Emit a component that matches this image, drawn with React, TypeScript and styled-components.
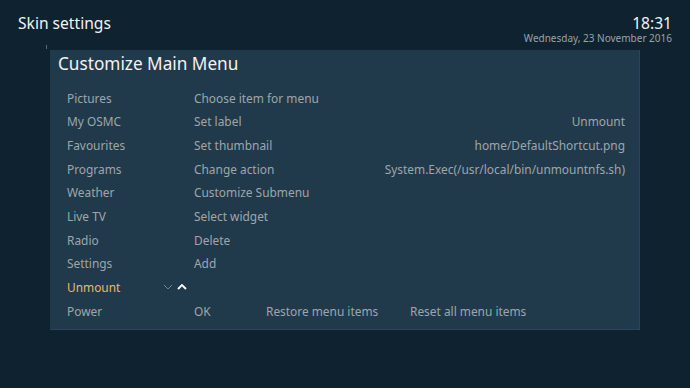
import styled, { createGlobalStyle } from "styled-components";

const GlobalStyle = createGlobalStyle`
  html, body {
    margin: 0;
    padding: 0;
    background: #0e2230;
  }
  body {
    font-family: "Noto Sans", "Open Sans", sans-serif;
    width: 690px;
    height: 388px;
    overflow: hidden;
  }
`;

const Screen = styled.div`
  width: 690px;
  height: 388px;
  background: #0e2230;
  display: flex;
  flex-direction: column;
`;

const Header = styled.header`
  display: flex;
  justify-content: space-between;
  align-items: flex-start;
  padding: 13px 18px 0 18px;
  height: 50px;
  box-sizing: border-box;
`;

const PageTitle = styled.h1`
  margin: 0;
  font-size: 15.6px;
  font-weight: 400;
  color: #f2f2f2;
  line-height: 20px;
`;

const Clock = styled.div`
  display: flex;
  flex-direction: column;
  align-items: flex-end;
`;

const Time = styled.span`
  font-size: 15.6px;
  color: #f2f2f2;
  line-height: 20px;
`;

const DateText = styled.span`
  font-size: 10px;
  color: #9aa3a9;
  line-height: 10px;
`;

const Panel = styled.section`
  margin-left: 50px;
  width: 590px;
  height: 280px;
  box-sizing: border-box;
  background: #213a4b;
  border-right: 1px solid #2b4658;
  border-bottom: 1px solid #2b4658;
  position: relative;
`;

const Tick = styled.span`
  position: absolute;
  left: -4px;
  top: -5px;
  width: 1px;
  height: 4px;
  background: #5a6a74;
`;

const PanelTitle = styled.h2`
  margin: 0;
  padding: 3px 0 0 8px;
  font-size: 17.2px;
  font-weight: 400;
  color: #f2f2f2;
  line-height: 22px;
  height: 33px;
`;

const List = styled.div`
  display: flex;
  flex-direction: column;
  padding: 0 14px 0 17px;
`;

const Row = styled.div`
  display: flex;
  align-items: center;
  height: 23.67px;
  font-size: 11.9px;
  color: #9ea6ac;
`;

const Label = styled.span<{ $active?: boolean }>`
  width: 96px;
  color: ${(p) => (p.$active ? "#e9b86a" : "#9ea6ac")};
`;

const Arrows = styled.span`
  width: 31px;
  display: flex;
  align-items: center;
  gap: 4px;
`;

const Spacer = styled.span`
  width: 31px;
`;

const Action = styled.span`
  flex: 1;
`;

const Value = styled.span`
  text-align: right;
`;

const Buttons = styled.div`
  display: flex;
  flex: 1;
`;

const Button = styled.span<{ $w: number }>`
  width: ${(p) => p.$w}px;
`;

const rows: [string, string, string][] = [
  ["Pictures", "Choose item for menu", ""],
  ["My OSMC", "Set label", "Unmount"],
  ["Favourites", "Set thumbnail", "home/DefaultShortcut.png"],
  ["Programs", "Change action", "System.Exec(/usr/local/bin/unmountnfs.sh)"],
  ["Weather", "Customize Submenu", ""],
  ["Live TV", "Select widget", ""],
  ["Radio", "Delete", ""],
  ["Settings", "Add", ""],
];

function Chevron({ up, color }: { up?: boolean; color: string }) {
  return (
    <svg width="10" height="6" viewBox="0 0 10 6">
      <path
        d={up ? "M1 5 L5 1 L9 5" : "M1 1 L5 5 L9 1"}
        fill="none"
        stroke={color}
        strokeWidth={up ? 1.8 : 1}
      />
    </svg>
  );
}

export default function App() {
  return (
    <>
      <GlobalStyle />
      <Screen>
        <Header>
          <PageTitle>Skin settings</PageTitle>
          <Clock>
            <Time>18:31</Time>
            <DateText>Wednesday, 23 November 2016</DateText>
          </Clock>
        </Header>
        <Panel>
          <Tick />
          <PanelTitle>Customize Main Menu</PanelTitle>
          <List>
            {rows.map(([label, action, value]) => (
              <Row key={label}>
                <Label>{label}</Label>
                <Spacer />
                <Action>{action}</Action>
                <Value>{value}</Value>
              </Row>
            ))}
            <Row>
              <Label $active>Unmount</Label>
              <Arrows>
                <Chevron color="#6f8594" />
                <Chevron up color="#ffffff" />
              </Arrows>
              <Action />
            </Row>
            <Row>
              <Label>Power</Label>
              <Spacer />
              <Buttons>
                <Button $w={72}>OK</Button>
                <Button $w={144}>Restore menu items</Button>
                <Button $w={130}>Reset all menu items</Button>
              </Buttons>
            </Row>
          </List>
        </Panel>
      </Screen>
    </>
  );
}
